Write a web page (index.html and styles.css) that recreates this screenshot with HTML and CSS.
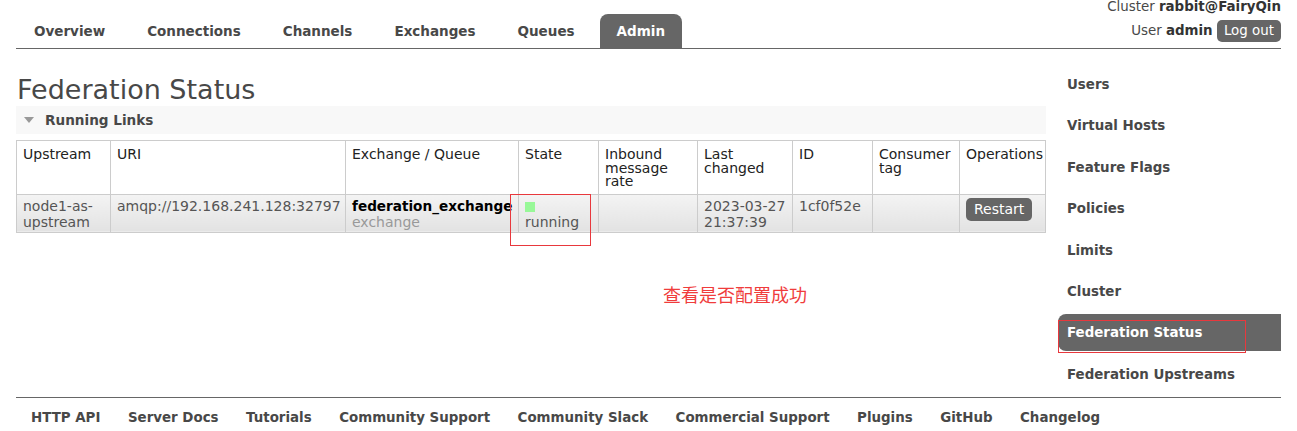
FILE: index.html
```html
<!DOCTYPE html>
<html>
<head>
<meta charset="utf-8">
<link rel="stylesheet" href="styles.css">
</head>
<body>
<div class="page">
  <header class="header">
    <ul class="tabs">
      <li class="tab">Overview</li>
      <li class="tab">Connections</li>
      <li class="tab">Channels</li>
      <li class="tab">Exchanges</li>
      <li class="tab">Queues</li>
      <li class="tab active">Admin</li>
    </ul>
    <div class="login">
      <div class="login-line">Cluster <b>rabbit@FairyQin</b></div>
      <div class="login-line">User <b>admin</b> <span class="btn logout">Log out</span></div>
    </div>
  </header>

  <div class="main">
    <div class="content">
      <h1 class="title">Federation Status</h1>
      <div class="section-head"><span class="tri"></span>Running Links</div>
      <table class="list">
        <thead>
          <tr>
            <th class="c1">Upstream</th>
            <th class="c2">URI</th>
            <th class="c3">Exchange / Queue</th>
            <th class="c4">State</th>
            <th class="c5">Inbound message rate</th>
            <th class="c6">Last changed</th>
            <th class="c7">ID</th>
            <th class="c8">Consumer tag</th>
            <th class="c9">Operations</th>
          </tr>
        </thead>
        <tbody>
          <tr>
            <td>node1-as-<br>upstream</td>
            <td>amqp://192.168.241.128:32797</td>
            <td><span class="xname">federation_exchange</span><br><span class="sub">exchange</span></td>
            <td><span class="state-dot"></span>running</td>
            <td></td>
            <td>2023-03-27<br>21:37:39</td>
            <td>1cf0f52e</td>
            <td></td>
            <td class="ops"><span class="btn restart">Restart</span></td>
          </tr>
        </tbody>
      </table>
    </div>
    <ul class="menu">
      <li class="menu-item">Users</li>
      <li class="menu-item">Virtual Hosts</li>
      <li class="menu-item">Feature Flags</li>
      <li class="menu-item">Policies</li>
      <li class="menu-item">Limits</li>
      <li class="menu-item">Cluster</li>
      <li class="menu-item selected">Federation Status</li>
      <li class="menu-item">Federation Upstreams</li>
    </ul>
  </div>

  <footer class="footer">
    <span>HTTP API</span>
    <span>Server Docs</span>
    <span>Tutorials</span>
    <span>Community Support</span>
    <span>Community Slack</span>
    <span>Commercial Support</span>
    <span>Plugins</span>
    <span>GitHub</span>
    <span>Changelog</span>
  </footer>

  <div class="mark mark-state"></div>
  <div class="mark mark-menu"></div>
  <div class="note">查看是否配置成功</div>
</div>
</body>
</html>
```

FILE: styles.css
```css
html, body {
  margin: 0;
  padding: 0;
  background: #fff;
}
body {
  font-family: "DejaVu Sans", Verdana, sans-serif;
  font-size: 13.5px;
  color: #484848;
}
.page {
  position: relative;
  padding: 0 16px;
  width: 1265px;
}
.header {
  display: flex;
  justify-content: space-between;
  align-items: flex-end;
  height: 48px;
  border-bottom: 1px solid #666;
}
.tabs {
  display: flex;
  list-style: none;
  margin: 0;
  padding: 0 0 0 1px;
  gap: 8px;
}
.tab {
  height: 34px;
  line-height: 34px;
  padding: 0 17px;
  font-weight: bold;
  font-size: 13.5px;
  color: #484848;
  border-radius: 8px 8px 0 0;
}
.tab.active {
  background: #666;
  color: #fff;
}
.login {
  align-self: flex-start;
  text-align: right;
  font-size: 13.4px;
  color: #484848;
}
.login-line {
  line-height: 14px;
}
.login-line + .login-line {
  margin-top: 6px;
  line-height: 22px;
}
.login b {
  color: #333;
}
.btn {
  display: inline-block;
  background: #666;
  color: #fff;
  border-radius: 5px;
  padding: 0 7px;
  line-height: 22px;
}
.main {
  display: flex;
  gap: 12px;
  height: 348px;
}
.content {
  flex: 1;
}
.title {
  margin: 25px 0 0 1px;
  font-size: 27px;
  font-weight: normal;
  line-height: 32px;
  color: #484848;
}
.section-head {
  height: 28px;
  line-height: 28px;
  background: #f8f8f8;
  font-weight: bold;
  font-size: 13.6px;
  color: #484848;
  padding-left: 8px;
  display: flex;
  align-items: center;
}
.tri {
  width: 0;
  height: 0;
  border-left: 5px solid transparent;
  border-right: 5px solid transparent;
  border-top: 6px solid #999;
  margin-right: 11px;
}
.list {
  margin-top: 6px;
  width: 1029px;
  border-collapse: collapse;
  table-layout: fixed;
}
.list th, .list td {
  border: 1px solid #ccc;
  vertical-align: top;
  text-align: left;
  font-size: 14px;
}
.list th {
  font-weight: normal;
  color: #222;
  line-height: 13.5px;
  height: 40px;
  padding: 7px 6px 5px;
  background: #fff;
}
.list td {
  color: #555;
  line-height: 16.5px;
  padding: 3px 6px 1px;
  height: 33px;
  background: linear-gradient(#f4f4f4, #e2e2e2);
  white-space: nowrap;
}
.c1 { width: 81px; }
.c2 { width: 222px; }
.c3 { width: 160px; }
.c4 { width: 67px; }
.c5 { width: 86px; }
.c6 { width: 82px; }
.c7 { width: 67px; }
.c8 { width: 74px; }
.c9 { width: 73px; }
.xname {
  font-weight: bold;
  font-size: 13.6px;
  color: #000;
}
.sub {
  color: #999;
}
.state-dot {
  display: block;
  width: 10px;
  height: 10px;
  background: #98f898;
  margin: 4px 0 2.5px;
}
.list td.ops {
  padding-top: 3px;
}
.restart {
  line-height: 23px;
  padding: 0 8px;
}
.menu {
  list-style: none;
  margin: 17px 0 0;
  padding: 0;
  width: 224px;
  display: flex;
  flex-direction: column;
  gap: 4.4px;
}
.menu-item {
  height: 37px;
  line-height: 37px;
  padding-left: 9px;
  font-weight: bold;
  font-size: 13.4px;
  color: #484848;
}
.menu-item.selected {
  background: #666;
  color: #fff;
  border-radius: 8px 0 0 8px;
}
.footer {
  border-top: 1px solid #666;
  display: flex;
  gap: 27.5px;
  padding: 11px 0 0 15px;
  font-weight: bold;
  font-size: 13.4px;
  color: #484848;
  line-height: 17px;
}
.mark {
  position: absolute;
  border: 1px solid #e8383d;
}
.mark-state {
  left: 510px;
  top: 194px;
  width: 79px;
  height: 50px;
}
.mark-menu {
  left: 1058px;
  top: 320px;
  width: 186px;
  height: 31px;
}
.note {
  position: absolute;
  left: 663px;
  top: 283px;
  color: #f03c3c;
  font-family: "Noto Sans CJK SC", sans-serif;
  font-size: 18px;
  line-height: 22px;
}
```
